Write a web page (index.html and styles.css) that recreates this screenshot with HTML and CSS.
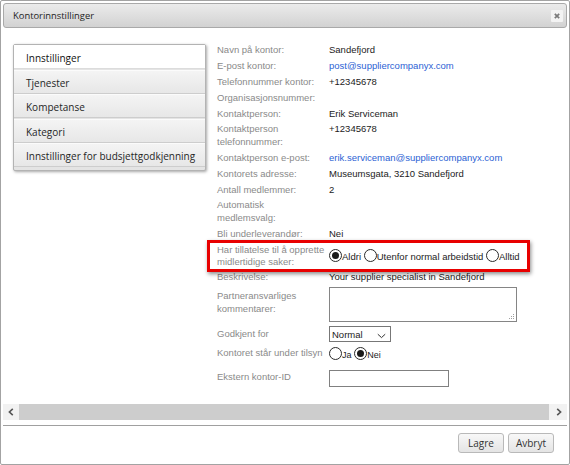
FILE: index.html
```html
<!DOCTYPE html>
<html>
<head>
<meta charset="utf-8">
<link rel="stylesheet" href="styles.css">
</head>
<body>
<div class="dialog">
  <div class="titlebar">
    <span class="title">Kontorinnstillinger</span>
    <span class="close"><svg width="12" height="12" viewBox="0 0 12 12"><path d="M3.8 3.8 L8.2 8.2 M8.2 3.8 L3.8 8.2" stroke="#7a7a7a" stroke-width="1.7" fill="none"/></svg></span>
  </div>
  <div class="content">
    <div class="tabs">
      <div class="tab active">Innstillinger</div>
      <div class="tab">Tjenester</div>
      <div class="tab">Kompetanse</div>
      <div class="tab">Kategori</div>
      <div class="tab">Innstillinger for budsjettgodkjenning</div>
    </div>
    <div class="form">
      <div class="row"><div class="lbl">Navn på kontor:</div><div class="val">Sandefjord</div></div>
      <div class="row"><div class="lbl">E-post kontor:</div><div class="val link">post@suppliercompanyx.com</div></div>
      <div class="row"><div class="lbl">Telefonnummer kontor:</div><div class="val">+12345678</div></div>
      <div class="row"><div class="lbl">Organisasjonsnummer:</div><div class="val"></div></div>
      <div class="row"><div class="lbl">Kontaktperson:</div><div class="val">Erik Serviceman</div></div>
      <div class="row"><div class="lbl">Kontaktperson<br>telefonnummer:</div><div class="val">+12345678</div></div>
      <div class="row"><div class="lbl">Kontaktperson e-post:</div><div class="val link">erik.serviceman@suppliercompanyx.com</div></div>
      <div class="row"><div class="lbl">Kontorets adresse:</div><div class="val">Museumsgata, 3210 Sandefjord</div></div>
      <div class="row"><div class="lbl">Antall medlemmer:</div><div class="val">2</div></div>
      <div class="row"><div class="lbl">Automatisk<br>medlemsvalg:</div><div class="val"></div></div>
      <div class="row"><div class="lbl">Bli underleverandør:</div><div class="val">Nei</div></div>
      <div class="row hl"><div class="lbl">Har tillatelse til å opprette<br>midlertidige saker:</div><div class="val radios"><span class="radio on"></span>Aldri <span class="radio"></span>Utenfor normal arbeidstid <span class="radio"></span>Alltid</div></div>
      <div class="row"><div class="lbl">Beskrivelse:</div><div class="val">Your supplier specialist in Sandefjord</div></div>
      <div class="row ta"><div class="lbl">Partneransvarliges<br>kommentarer:</div><div class="val"><div class="textarea"><svg class="grip" width="7" height="7" viewBox="0 0 7 7"><g fill="#a0a0a0"><rect x="5" y="1" width="1" height="1"/><rect x="3" y="3" width="1" height="1"/><rect x="5" y="3" width="1" height="1"/><rect x="1" y="5" width="1" height="1"/><rect x="3" y="5" width="1" height="1"/><rect x="5" y="5" width="1" height="1"/></g></svg></div></div></div>
      <div class="row sel"><div class="lbl">Godkjent for</div><div class="val"><div class="select"><span>Normal</span><svg width="9" height="6" viewBox="0 0 9 6"><path d="M0.8 1.2 L4.5 4.6 L8.2 1.2" stroke="#333" stroke-width="1" fill="none"/></svg></div></div></div>
      <div class="row rad"><div class="lbl">Kontoret står under tilsyn</div><div class="val radios2"><span class="radio"></span><span class="small">Ja</span> <span class="radio on"></span><span class="small">Nei</span></div></div>
      <div class="row inp"><div class="lbl">Ekstern kontor-ID</div><div class="val"><div class="input"></div></div></div>
    </div>
  </div>
  <div class="hscroll">
    <span class="arr"><svg width="6" height="8" viewBox="0 0 6 8"><path d="M4.8 0.8 L1.4 4 L4.8 7.2" stroke="#555" stroke-width="1.6" fill="none"/></svg></span>
    <div class="thumb"></div>
    <span class="arr"><svg width="6" height="8" viewBox="0 0 6 8"><path d="M1.2 0.8 L4.6 4 L1.2 7.2" stroke="#555" stroke-width="1.6" fill="none"/></svg></span>
  </div>
  <div class="footer">
    <button class="btn">Lagre</button>
    <button class="btn">Avbryt</button>
  </div>
</div>
</body>
</html>
```

FILE: styles.css
```css
* { box-sizing: border-box; }
html, body { margin: 0; padding: 0; background: #fff; }
body {
  width: 570px;
  height: 465px;
  overflow: hidden;
  font-family: "Liberation Sans", Arial, sans-serif;
}
.dialog {
  width: 570px;
  height: 465px;
  border: 1px solid #a3a3a3;
  border-radius: 2px;
  padding: 2px;
  display: flex;
  flex-direction: column;
  background: #fff;
}
.titlebar {
  height: 25px;
  flex: none;
  border: 1px solid #a9a9a9;
  border-radius: 3px;
  background: linear-gradient(#ebebeb, #d2d2d2);
  display: flex;
  align-items: center;
  justify-content: space-between;
  padding: 0 3px 0 9px;
}
.title {
  font-family: "Open Sans", sans-serif;
  font-size: 9.4px;
  color: #1e1e1e;
}
.close {
  width: 12px;
  height: 12px;
  background: #f3f3f3;
  border-radius: 1px;
  display: flex;
}
.content {
  height: 376px;
  flex: none;
  display: flex;
  align-items: flex-start;
  padding: 14px 0 0 10px;
  overflow: hidden;
}
.tabs {
  margin-top: 2px;
  width: 193px;
  flex: none;
  border: 1px solid #b3b3b3;
  border-radius: 2px;
  background: #e4e4e4;
  padding: 0 0 2px;
  box-shadow: 1px 1px 3px rgba(0, 0, 0, 0.35);
}
.tab {
  height: 24px;
  line-height: 22px;
  padding: 1px 0 0 12px;
  border-top: 1px solid #fbfbfb;
  border-bottom: 1px solid #cdcdcd;
  background: linear-gradient(#f4f4f4, #e7e7e7);
  margin-bottom: 0.5px;
  font-family: "Open Sans", sans-serif;
  font-size: 10px;
  color: #262626;
  white-space: nowrap;
}
.tab.active {
  background: #fff;
  border-top-color: #fff;
  border-bottom-color: #dcdcdc;
  color: #111;
}
.form {
  margin-left: 11px;
  width: 320px;
  flex: none;
  font-size: 9.5px;
}
.row {
  display: flex;
  padding: 1.4px 0;
  line-height: 13px;
}
.lbl {
  width: 112px;
  flex: none;
  color: #8a8a8a;
  white-space: nowrap;
}
.val {
  color: #1c1c1c;
  white-space: nowrap;
}
.link { color: #2c62d4; }
.row.hl {
  position: relative;
  padding: 2px 0 0;
  margin-bottom: 0.5px;
}
.row.hl .lbl { line-height: 12.5px; }
.row.hl::after {
  content: "";
  position: absolute;
  left: -10px;
  right: 7px;
  top: -1.5px;
  bottom: -3px;
  border: 3px solid #e80000;
  box-shadow: 1px 2px 4px rgba(0, 0, 0, 0.45);
  pointer-events: none;
}
.radios { padding-top: 5px; }
.radio {
  display: inline-block;
  width: 13px;
  height: 13px;
  border: 1px solid #2a2a2a;
  border-radius: 50%;
  background: #fff;
  vertical-align: -2px;
  position: relative;
}
.radio.on::after {
  content: "";
  position: absolute;
  left: 2px;
  top: 2px;
  width: 7px;
  height: 7px;
  border-radius: 50%;
  background: #1a1a1a;
}
.row.ta { padding: 2.5px 0 2px; }
.row.ta .lbl { padding-top: 1.6px; }
.textarea {
  width: 188px;
  height: 35px;
  border: 1px solid #858585;
  position: relative;
}
.grip { position: absolute; right: 1px; bottom: 1px; }
.row.sel { padding: 0 0 1px; }
.row.sel .lbl { padding-top: 2.2px; }
.select {
  margin-top: 2px;
  width: 62px;
  height: 16px;
  border: 1px solid #777;
  display: flex;
  align-items: center;
  justify-content: space-between;
  padding: 0 4px 0 2px;
  line-height: 13px;
}
.select svg { margin-top: 4px; }
.row.rad { padding: 2.2px 0 0; }
.radios2 { padding-top: 1.5px; }
.small { font-size: 9px; }
.row.inp { padding: 8px 0 0; }
.input {
  width: 120px;
  height: 17px;
  border: 1px solid #808080;
}
.hscroll {
  height: 16px;
  flex: none;
  display: flex;
  align-items: stretch;
  background: #f2f2f2;
}
.arr {
  width: 16px;
  flex: none;
  display: flex;
  align-items: center;
  justify-content: center;
}
.thumb {
  flex: 1;
  background: #cdcdcd;
  margin-right: 2px;
}
.footer {
  margin-top: 5px;
  border-top: 1px solid #a0a0a0;
  padding: 7px 13px 0 0;
  display: flex;
  justify-content: flex-end;
  gap: 4px;
}
.btn {
  width: 46px;
  height: 20px;
  border: 1px solid #b9b9b9;
  border-radius: 3px;
  background: linear-gradient(#f8f8f8, #e4e4e4);
  font-family: "Open Sans", sans-serif;
  font-size: 10px;
  color: #333;
  padding: 0;
  margin: 0;
}
```
